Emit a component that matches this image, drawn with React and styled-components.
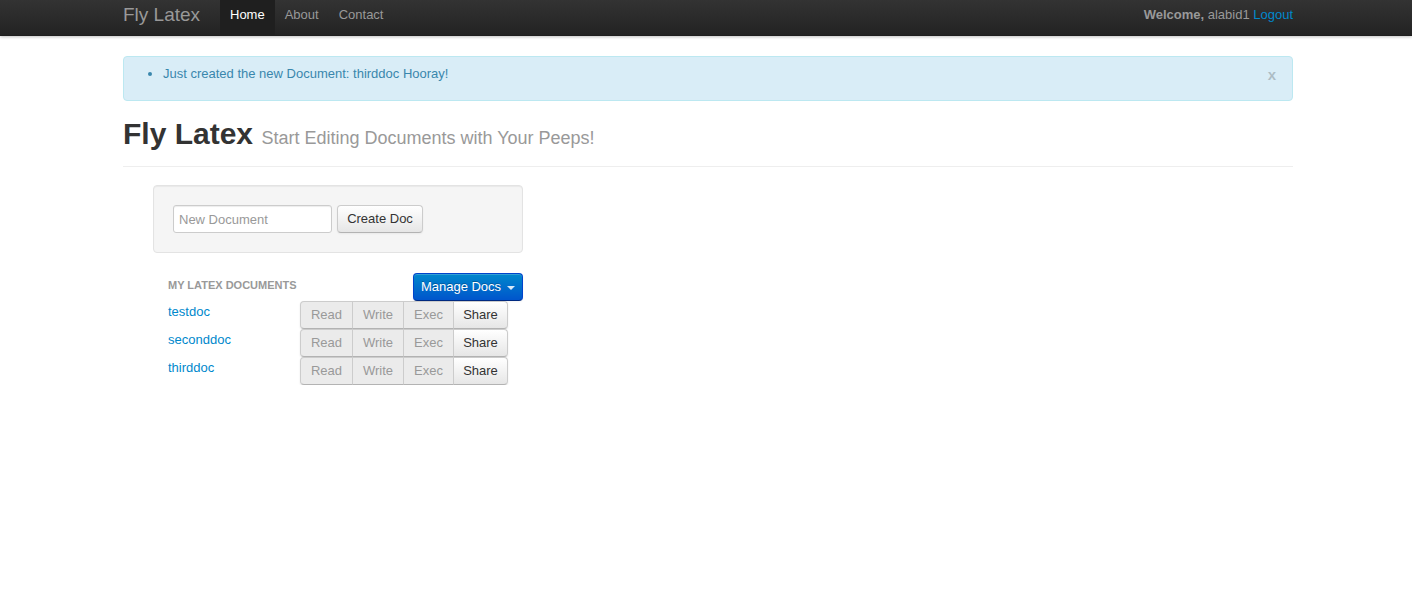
import React from "react";
import styled, { createGlobalStyle, css } from "styled-components";

const Global = createGlobalStyle`
  html, body { margin: 0; padding: 0; background: #fff; }
  body {
    font-family: "Liberation Sans", Helvetica, Arial, sans-serif;
    font-size: 13px;
    line-height: 18px;
    color: #333;
  }
  * { box-sizing: border-box; }
`;

const Navbar = styled.div`
  height: 36px;
  background: linear-gradient(to bottom, #333333, #222222);
  box-shadow: 0 1px 3px rgba(0, 0, 0, 0.25), inset 0 -1px 0 rgba(0, 0, 0, 0.1);
`;

const Container = styled.div`
  width: 1170px;
  margin-left: calc(50% - 583px);
`;

const NavInner = styled(Container)`
  display: flex;
  align-items: flex-start;
  height: 36px;
`;

const Brand = styled.a`
  display: block;
  width: 97px;
  font-size: 19px;
  font-weight: 200;
  line-height: 20px;
  color: #999;
  padding: 5px 0 11px 0;
  text-decoration: none;
  white-space: nowrap;
`;

const NavList = styled.ul`
  display: flex;
  list-style: none;
  margin: 0;
  padding: 0;
`;

const NavLink = styled.a`
  display: block;
  padding: 6px 10px 12px;
  line-height: 18px;
  font-size: 13px;
  text-decoration: none;
  color: ${(p) => (p.$active ? "#fff" : "#999")};
  background: ${(p) => (p.$active ? "#1f1f1f" : "transparent")};
`;

const NavRight = styled.p`
  margin: 0 0 0 auto;
  padding-top: 6px;
  line-height: 18px;
  color: #999;
  white-space: nowrap;
`;

const Strong = styled.strong`
  font-weight: bold;
`;

const Link = styled.a`
  color: #0088cc;
  text-decoration: none;
`;

const Alert = styled.div`
  margin-top: 20px;
  display: flex;
  align-items: flex-start;
  padding: 8px 35px 8px 14px;
  background: #d9edf7;
  border: 1px solid #bce8f1;
  border-radius: 4px;
  color: #3a87ad;
`;

const AlertList = styled.ul`
  flex: 1;
  margin: 0 0 9px 25px;
  padding: 0;
  list-style: disc;
`;

const Close = styled.a`
  font-size: 15px;
  font-weight: bold;
  line-height: 18px;
  color: #000;
  opacity: 0.2;
  margin-right: -19px;
  margin-top: 1px;
  cursor: pointer;
`;

const PageHeader = styled.div`
  margin: 15px 0 18px;
  padding-bottom: 10px;
  border-bottom: 1px solid #eee;
`;

const H1 = styled.h1`
  margin: 0;
  font-size: 30px;
  line-height: 36px;
  font-weight: bold;
  color: #333;
`;

const Small = styled.small`
  font-size: 18px;
  font-weight: normal;
  color: #999;
`;

const Content = styled.div`
  margin-left: 30px;
  width: 370px;
`;

const Well = styled.div`
  display: flex;
  align-items: center;
  gap: 5px;
  padding: 19px;
  background: #f5f5f5;
  border: 1px solid #e3e3e3;
  border-radius: 4px;
  box-shadow: inset 0 1px 1px rgba(0, 0, 0, 0.05);
`;

const Input = styled.input`
  width: 159px;
  height: 28px;
  padding: 4px 5px;
  font-family: inherit;
  font-size: 13px;
  line-height: 18px;
  color: #555;
  border: 1px solid #ccc;
  border-radius: 3px;
  box-shadow: inset 0 1px 1px rgba(0, 0, 0, 0.075);
  background: #fff;
  &::placeholder { color: #999; }
`;

const btnBase = css`
  display: inline-flex;
  align-items: center;
  justify-content: center;
  height: 28px;
  padding: 4px 10px;
  font-family: inherit;
  font-size: 13px;
  line-height: 18px;
  white-space: nowrap;
  cursor: pointer;
`;

const Button = styled.button`
  ${btnBase};
  width: 86px;
  color: #333;
  background: linear-gradient(to bottom, #ffffff, #e6e6e6);
  border: 1px solid #ccc;
  border-bottom-color: #b3b3b3;
  border-radius: 4px;
  box-shadow: inset 0 1px 0 rgba(255, 255, 255, 0.2), 0 1px 2px rgba(0, 0, 0, 0.05);
`;

const PrimaryButton = styled.button`
  ${btnBase};
  width: 110px;
  padding: 4px 8px;
  color: #fff;
  text-shadow: 0 -1px 0 rgba(0, 0, 0, 0.25);
  background: linear-gradient(to bottom, #0088cc, #0055cc);
  border: 1px solid #0044cc;
  border-bottom-color: #002a80;
  border-radius: 4px;
  box-shadow: inset 0 1px 0 rgba(255, 255, 255, 0.2), 0 1px 2px rgba(0, 0, 0, 0.05);
`;

const Caret = styled.span`
  display: inline-block;
  width: 0;
  height: 0;
  margin-left: 6px;
  margin-top: 1px;
  border-top: 4px solid #fff;
  border-left: 4px solid transparent;
  border-right: 4px solid transparent;
  opacity: 0.85;
`;

const DocsHeader = styled.div`
  display: flex;
  justify-content: space-between;
  align-items: flex-start;
  margin-top: 20px;
`;

const NavHeader = styled.div`
  padding: 3px 15px 0;
  font-size: 11px;
  font-weight: bold;
  line-height: 18px;
  color: #999;
  text-transform: uppercase;
  text-shadow: 0 1px 0 rgba(255, 255, 255, 0.5);
`;

const DocRow = styled.div`
  display: grid;
  grid-template-columns: 132px auto;
  align-items: start;
  padding-left: 15px;
  height: 28px;
`;

const DocLink = styled(Link)`
  padding-top: 2px;
  line-height: 18px;
`;

const BtnGroup = styled.div`
  display: inline-flex;
  justify-self: start;
  border-radius: 4px;
  box-shadow: 0 1px 2px rgba(0, 0, 0, 0.1);
`;

const GroupButton = styled.button`
  ${btnBase};
  width: ${(p) => p.$w}px;
  padding: 4px 0;
  margin-left: -1px;
  border: 1px solid #ccc;
  border-bottom-color: #b3b3b3;
  color: ${(p) => (p.$disabled ? "#999" : "#333")};
  background: ${(p) =>
    p.$disabled ? "#ebebeb" : "linear-gradient(to bottom, #ffffff, #e6e6e6)"};
  &:first-child {
    margin-left: 0;
    border-radius: 4px 0 0 4px;
  }
  &:last-child {
    border-radius: 0 4px 4px 0;
  }
`;

const docs = ["testdoc", "seconddoc", "thirddoc"];

export default function App() {
  return (
    <>
      <Global />
      <Navbar>
        <NavInner>
          <Brand>Fly Latex</Brand>
          <NavList>
            <li><NavLink $active>Home</NavLink></li>
            <li><NavLink>About</NavLink></li>
            <li><NavLink>Contact</NavLink></li>
          </NavList>
          <NavRight>
            <Strong>Welcome,</Strong> alabid1 <Link>Logout</Link>
          </NavRight>
        </NavInner>
      </Navbar>
      <Container>
        <Alert>
          <AlertList>
            <li>Just created the new Document: thirddoc Hooray!</li>
          </AlertList>
          <Close>x</Close>
        </Alert>
        <PageHeader>
          <H1>
            Fly Latex <Small>Start Editing Documents with Your Peeps!</Small>
          </H1>
        </PageHeader>
        <Content>
          <Well>
            <Input placeholder="New Document" />
            <Button>Create Doc</Button>
          </Well>
          <DocsHeader>
            <NavHeader>My Latex Documents</NavHeader>
            <PrimaryButton>
              Manage Docs <Caret />
            </PrimaryButton>
          </DocsHeader>
          {docs.map((d) => (
            <DocRow key={d}>
              <DocLink>{d}</DocLink>
              <BtnGroup>
                <GroupButton $w={53} $disabled>Read</GroupButton>
                <GroupButton $w={52} $disabled>Write</GroupButton>
                <GroupButton $w={51} $disabled>Exec</GroupButton>
                <GroupButton $w={55}>Share</GroupButton>
              </BtnGroup>
            </DocRow>
          ))}
        </Content>
      </Container>
    </>
  );
}
